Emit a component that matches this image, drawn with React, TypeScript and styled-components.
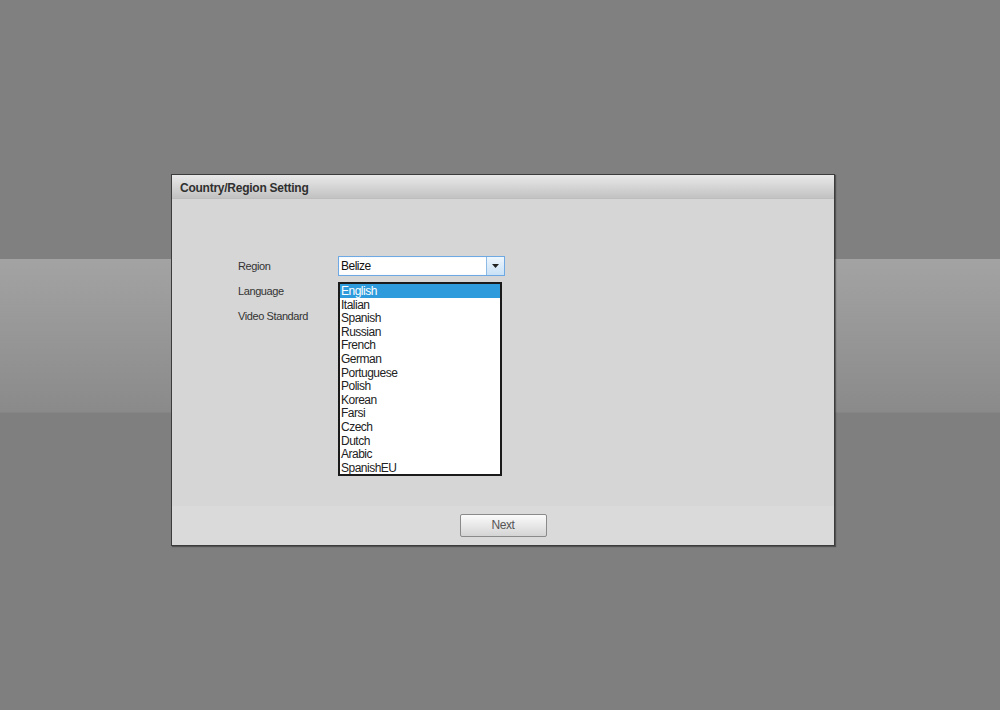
import styled, { createGlobalStyle } from "styled-components";

const GlobalStyle = createGlobalStyle`
  html, body {
    margin: 0;
    padding: 0;
  }
  body {
    font-family: "Liberation Sans", Arial, sans-serif;
    font-size: 12px;
    color: #333;
  }
`;

const languages = [
  "English",
  "Italian",
  "Spanish",
  "Russian",
  "French",
  "German",
  "Portuguese",
  "Polish",
  "Korean",
  "Farsi",
  "Czech",
  "Dutch",
  "Arabic",
  "SpanishEU",
];

export default function App() {
  const fields = [
    { label: "Region", value: "Belize", open: true },
    { label: "Language", value: "", open: false },
    { label: "Video Standard", value: "", open: false },
  ];

  return (
    <>
      <GlobalStyle />
      <Page>
        <Dialog>
          <TitleBar>Country/Region Setting</TitleBar>
          <Body>
            <Form>
              {fields.map((f, idx) => (
                <Row key={"row" + idx}>
                  <Label>{f.label}</Label>
                  {f.open ? (
                    <SelectWrap>
                      <Select>
                        <SelectText>{f.value}</SelectText>
                        <ArrowBtn>
                          <svg width="7" height="4" viewBox="0 0 7 4">
                            <path d="M0 0h7L3.5 4z" fill="#222" />
                          </svg>
                        </ArrowBtn>
                      </Select>
                      <ListBox>
                        {languages.map((item, i) => (
                          <Option key={"lang" + i} $selected={i === 0}>
                            {item}
                          </Option>
                        ))}
                      </ListBox>
                    </SelectWrap>
                  ) : (
                    <EmptySlot />
                  )}
                </Row>
              ))}
            </Form>
          </Body>
          <Footer>
            <Button>Next</Button>
          </Footer>
        </Dialog>
      </Page>
    </>
  );
}

const Page = styled.div`
  width: 1000px;
  height: 710px;
  box-sizing: border-box;
  padding: 174px 0 0 171px;
  background: linear-gradient(
    to bottom,
    #808080 0,
    #808080 259px,
    #a3a3a3 259px,
    #8a8a8a 412px,
    #7f7f7f 413px,
    #7f7f7f 100%
  );
`;

const Dialog = styled.div`
  width: 664px;
  height: 372px;
  box-sizing: border-box;
  border: 1px solid #3c3c3c;
  box-shadow: 1px 1px 1px rgba(0, 0, 0, 0.35);
  background: #d7d7d7;
  display: flex;
  flex-direction: column;
`;

const TitleBar = styled.div`
  height: 24px;
  flex-shrink: 0;
  box-sizing: border-box;
  padding: 6px 0 0 8px;
  font-weight: bold;
  font-size: 12px;
  letter-spacing: -0.25px;
  color: #303030;
  background: linear-gradient(to bottom, #e9e9e9, #c2c2c2);
  border-bottom: 1px solid #bdbdbd;
`;

const Body = styled.div`
  height: 307px;
  flex-shrink: 0;
  box-sizing: border-box;
  padding: 57px 0 0 66px;
  background: #d6d6d6;
`;

const Form = styled.div`
  display: flex;
  flex-direction: column;
  gap: 5px;
`;

const Row = styled.div`
  display: flex;
  align-items: center;
  height: 20px;
`;

const Label = styled.div`
  width: 100px;
  color: #333;
  font-size: 11px;
  letter-spacing: -0.4px;
`;

const SelectWrap = styled.div`
  position: relative;
`;

const Select = styled.div`
  width: 167px;
  height: 20px;
  box-sizing: border-box;
  border: 1px solid #6fa9e3;
  box-shadow: inset 0 0 1px #a9cdf2;
  background: #fff;
  display: flex;
  align-items: stretch;
`;

const SelectText = styled.div`
  flex: 1;
  padding-left: 2px;
  line-height: 18px;
  letter-spacing: -0.5px;
  color: #111;
`;

const ArrowBtn = styled.div`
  width: 17px;
  border-left: 1px solid #8dbbe6;
  background: linear-gradient(to bottom, #eef6fd, #c9e1f6);
  display: flex;
  align-items: center;
  justify-content: center;
`;

const ListBox = styled.div`
  position: absolute;
  top: 26px;
  left: 0;
  width: 164px;
  box-sizing: border-box;
  border: 2px solid #1b1b1b;
  background: #fff;
  z-index: 2;
`;

const Option = styled.div<{ $selected: boolean }>`
  height: 13.6px;
  line-height: 14px;
  padding-left: 1px;
  font-size: 12px;
  letter-spacing: -0.5px;
  color: ${(p) => (p.$selected ? "#fff" : "#222")};
  background: ${(p) => (p.$selected ? "#2d9bdc" : "transparent")};
`;

const EmptySlot = styled.div`
  width: 167px;
  height: 20px;
`;

const Footer = styled.div`
  flex: 1;
  display: flex;
  align-items: center;
  justify-content: center;
  background: #dadada;
  padding-bottom: 1px;
`;

const Button = styled.div`
  width: 87px;
  height: 23px;
  box-sizing: border-box;
  border: 1px solid #8a8a8a;
  border-radius: 2px;
  background: linear-gradient(to bottom, #fbfbfb, #d4d4d4);
  color: #555;
  font-size: 12px;
  letter-spacing: -0.4px;
  display: flex;
  align-items: center;
  justify-content: center;
`;
